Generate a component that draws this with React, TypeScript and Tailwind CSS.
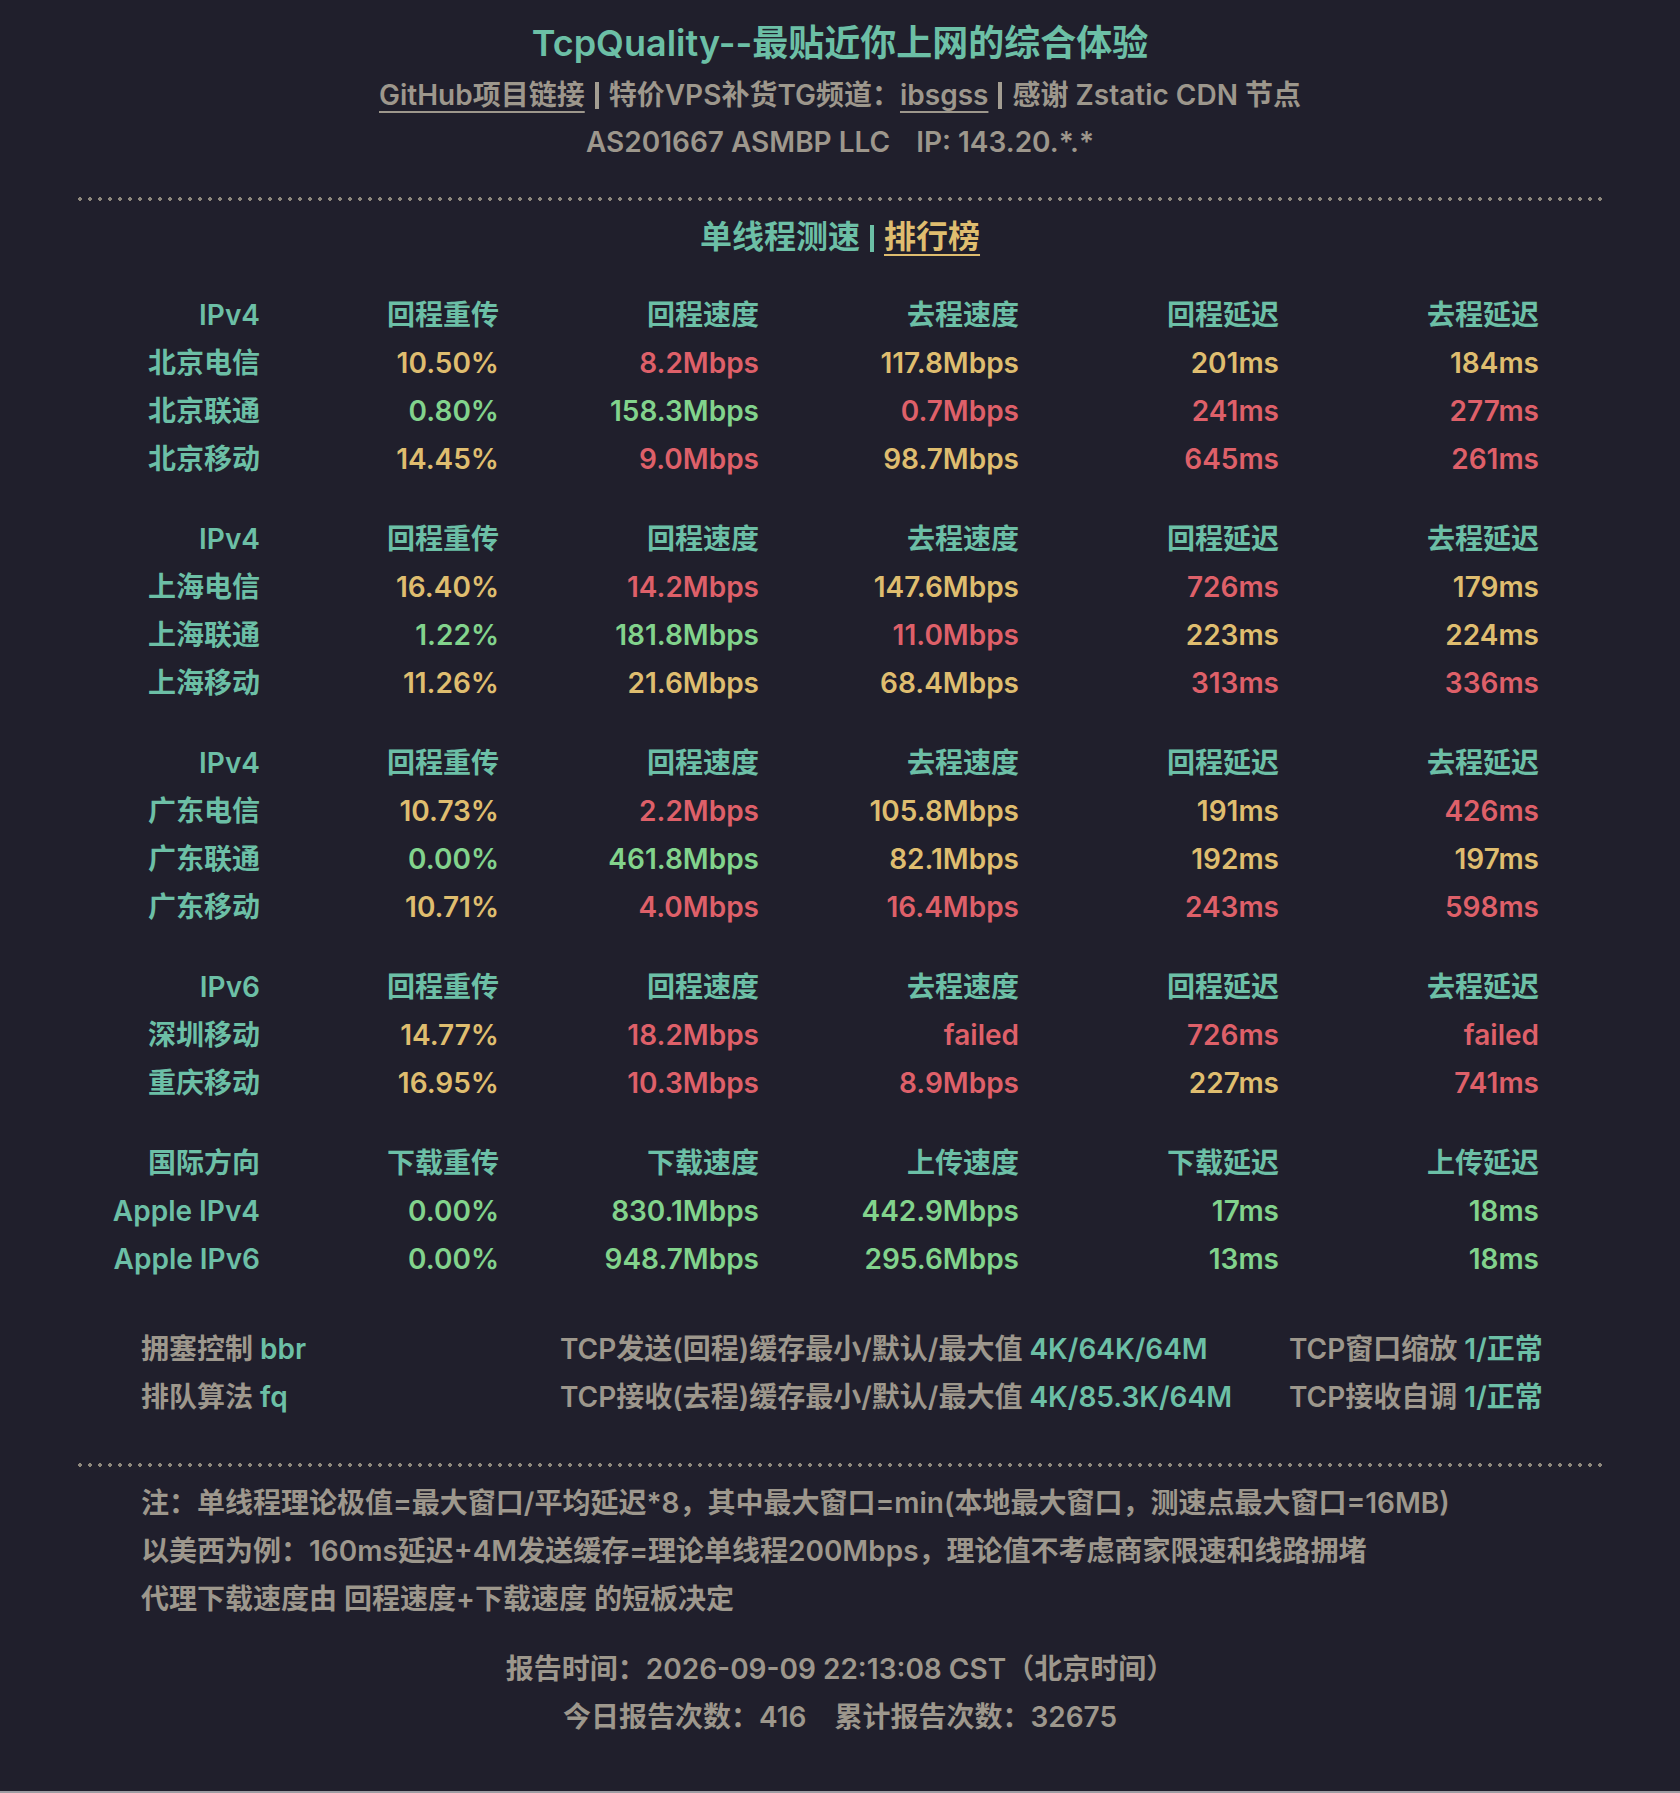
import React from "react";

type Tone = "y" | "r" | "g";

type Row = { name: string; cells: [string, Tone][] };

type Group = { head: string[]; rows: Row[] };

const TONE: Record<Tone, string> = {
  y: "text-[#dfbd6f]",
  r: "text-[#de6069]",
  g: "text-[#82d38c]",
};

const CN_HEAD = ["回程重传", "回程速度", "去程速度", "回程延迟", "去程延迟"];

const GROUPS: Group[] = [
  {
    head: ["IPv4", ...CN_HEAD],
    rows: [
      { name: "北京电信", cells: [["10.50%", "y"], ["8.2Mbps", "r"], ["117.8Mbps", "y"], ["201ms", "y"], ["184ms", "y"]] },
      { name: "北京联通", cells: [["0.80%", "g"], ["158.3Mbps", "g"], ["0.7Mbps", "r"], ["241ms", "r"], ["277ms", "r"]] },
      { name: "北京移动", cells: [["14.45%", "y"], ["9.0Mbps", "r"], ["98.7Mbps", "y"], ["645ms", "r"], ["261ms", "r"]] },
    ],
  },
  {
    head: ["IPv4", ...CN_HEAD],
    rows: [
      { name: "上海电信", cells: [["16.40%", "y"], ["14.2Mbps", "r"], ["147.6Mbps", "y"], ["726ms", "r"], ["179ms", "y"]] },
      { name: "上海联通", cells: [["1.22%", "g"], ["181.8Mbps", "g"], ["11.0Mbps", "r"], ["223ms", "y"], ["224ms", "y"]] },
      { name: "上海移动", cells: [["11.26%", "y"], ["21.6Mbps", "y"], ["68.4Mbps", "y"], ["313ms", "r"], ["336ms", "r"]] },
    ],
  },
  {
    head: ["IPv4", ...CN_HEAD],
    rows: [
      { name: "广东电信", cells: [["10.73%", "y"], ["2.2Mbps", "r"], ["105.8Mbps", "y"], ["191ms", "y"], ["426ms", "r"]] },
      { name: "广东联通", cells: [["0.00%", "g"], ["461.8Mbps", "g"], ["82.1Mbps", "y"], ["192ms", "y"], ["197ms", "y"]] },
      { name: "广东移动", cells: [["10.71%", "y"], ["4.0Mbps", "r"], ["16.4Mbps", "r"], ["243ms", "r"], ["598ms", "r"]] },
    ],
  },
  {
    head: ["IPv6", ...CN_HEAD],
    rows: [
      { name: "深圳移动", cells: [["14.77%", "y"], ["18.2Mbps", "r"], ["failed", "r"], ["726ms", "r"], ["failed", "r"]] },
      { name: "重庆移动", cells: [["16.95%", "y"], ["10.3Mbps", "r"], ["8.9Mbps", "r"], ["227ms", "y"], ["741ms", "r"]] },
    ],
  },
  {
    head: ["国际方向", "下载重传", "下载速度", "上传速度", "下载延迟", "上传延迟"],
    rows: [
      { name: "Apple IPv4", cells: [["0.00%", "g"], ["830.1Mbps", "g"], ["442.9Mbps", "g"], ["17ms", "g"], ["18ms", "g"]] },
      { name: "Apple IPv6", cells: [["0.00%", "g"], ["948.7Mbps", "g"], ["295.6Mbps", "g"], ["13ms", "g"], ["18ms", "g"]] },
    ],
  },
];

const GRID = "grid grid-cols-[182px_239px_260px_260px_260px_260px] text-right leading-[48px]";

function Dots() {
  return (
    <div className="mx-[75px] h-[4px] bg-[radial-gradient(circle,#8d877c_1.6px,transparent_2.1px)] bg-[length:10px_4px]" />
  );
}

function Pipe({ className = "" }: { className?: string }) {
  return <span className={"mx-[10px] inline-block h-[27px] w-[4px] align-[-4px] " + className} />;
}

export default function App() {
  return (
    <div
      className="box-border h-[1793px] overflow-hidden border-b-2 border-[#9c9ca2] bg-[#201f2c] pt-[15px] text-[28px] font-semibold text-[#9d978c]"
      style={{ fontFamily: "Inter, 'Noto Sans CJK SC', sans-serif" }}
    >
      <header className="text-center">
        <h1 className="text-[36px] leading-[56px] text-[#6cbfa6]">TcpQuality--最贴近你上网的综合体验</h1>
        <p className="leading-[48px]">
          <span className="underline decoration-2 underline-offset-[6px]">GitHub项目链接</span>
          <Pipe className="bg-[#a39d92]" />
          特价VPS补货TG频道：<span className="underline decoration-2 underline-offset-[6px]">ibsgss</span>
          <Pipe className="bg-[#a39d92]" />
          感谢 Zstatic CDN 节点
        </p>
        <p className="leading-[46px]">
          AS201667 ASMBP LLC<span className="ml-[26px]">IP: 143.20.*.*</span>
        </p>
      </header>

      <div className="mt-[32px]">
        <Dots />
      </div>

      <div className="mt-[12px] text-center text-[32px] leading-[48px] text-[#6cbfa6]">
        单线程测速
        <Pipe className="bg-[#6cbfa6]" />
        <span className="text-[#dfbd6f] underline decoration-2 underline-offset-[6px]">排行榜</span>
      </div>

      <div className="ml-[78px] mt-[30px] flex flex-col gap-[32px]">
        {GROUPS.map((g, gi) => (
          <div key={gi} className={GRID}>
            {g.head.map((h) => (
              <div key={h} className="text-[#6cbfa6]">
                {h}
              </div>
            ))}
            {g.rows.map((r) => (
              <React.Fragment key={r.name}>
                <div className="text-[#6cbfa6]">{r.name}</div>
                {r.cells.map(([v, t], i) => (
                  <div key={i} className={TONE[t]}>
                    {v}
                  </div>
                ))}
              </React.Fragment>
            ))}
          </div>
        ))}
      </div>

      <div className="ml-[141px] mt-[42px] grid grid-cols-[419px_729px_auto] leading-[48px]">
        <div>
          拥塞控制 <span className="text-[#6cbfa6]">bbr</span>
        </div>
        <div>
          TCP发送(回程)缓存最小/默认/最大值 <span className="text-[#6cbfa6]">4K/64K/64M</span>
        </div>
        <div>
          TCP窗口缩放 <span className="text-[#6cbfa6]">1/正常</span>
        </div>
        <div>
          排队算法 <span className="text-[#6cbfa6]">fq</span>
        </div>
        <div>
          TCP接收(去程)缓存最小/默认/最大值 <span className="text-[#6cbfa6]">4K/85.3K/64M</span>
        </div>
        <div>
          TCP接收自调 <span className="text-[#6cbfa6]">1/正常</span>
        </div>
      </div>

      <div className="mt-[42px]">
        <Dots />
      </div>

      <div className="ml-[141px] mt-[12px] leading-[48px]">
        <p>注：单线程理论极值=最大窗口/平均延迟*8，其中最大窗口=min(本地最大窗口，测速点最大窗口=16MB)</p>
        <p>以美西为例：160ms延迟+4M发送缓存=理论单线程200Mbps，理论值不考虑商家限速和线路拥堵</p>
        <p>代理下载速度由 回程速度+下载速度 的短板决定</p>
      </div>

      <footer className="mt-[22px] text-center leading-[48px]">
        <p>报告时间：2026-09-09 22:13:08 CST（北京时间）</p>
        <p>
          今日报告次数：416<span className="ml-[28px]">累计报告次数：32675</span>
        </p>
      </footer>
    </div>
  );
}
